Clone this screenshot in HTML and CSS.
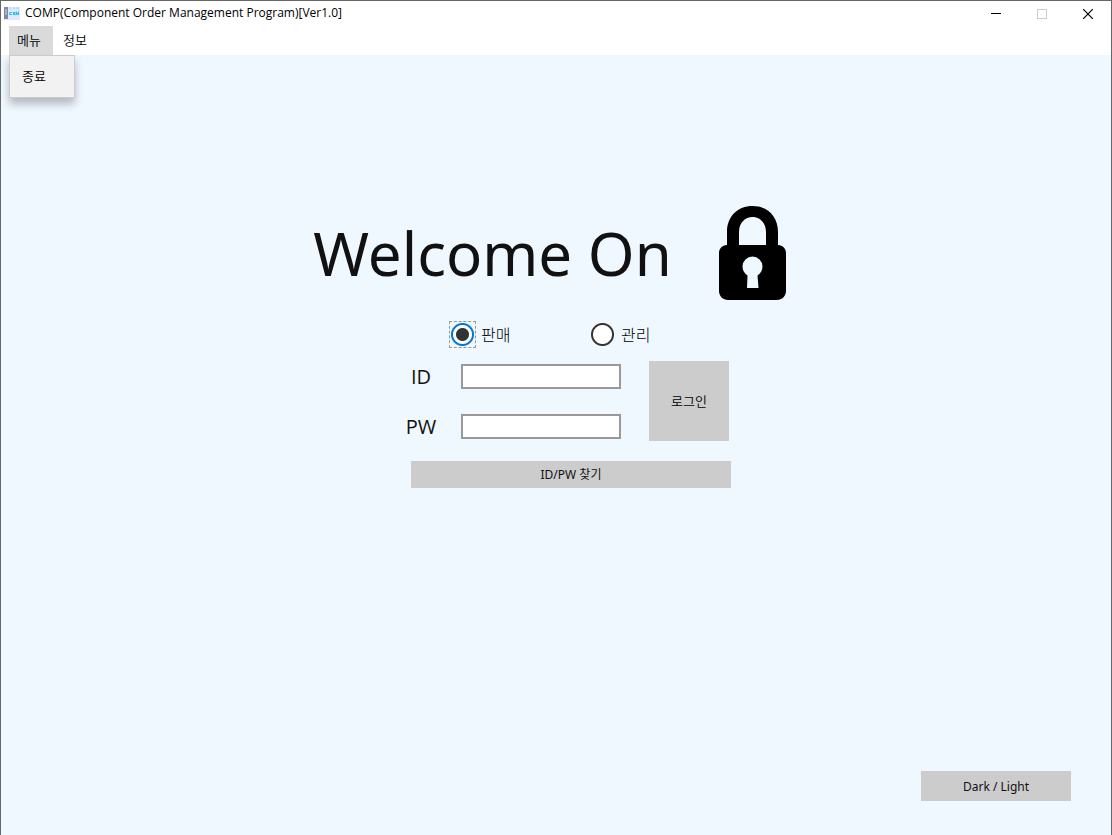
FILE: index.html
```html
<!DOCTYPE html>
<html lang="ko">
<head>
<meta charset="utf-8">
<title>COMP(Component Order Management Program)[Ver1.0]</title>
<link rel="stylesheet" href="styles.css">
</head>
<body>
<div class="window">
  <header class="titlebar">
    <svg class="app-icon" width="16" height="13" viewBox="0 0 16 13" aria-hidden="true">
      <rect width="16" height="13" fill="#dfe9fb"/>
      <rect width="4" height="12" fill="#8087a3"/>
      <rect x="1" y="2" width="2" height="6" fill="#a9afc4"/>
      <path d="M5 1h2M9 1h2M12 1h3" stroke="#8fd6f8"/>
      <path d="M8 5.500H6.500Q5.500 5.500 5.500 6.500T6.500 7.500H8M9.500 8V5.500H11L10.500 7L11.500 8M12.500 8V5.500L13.500 7L14.500 5.500V8" fill="none" stroke="#28c0f5" stroke-width="1.100"/>
    </svg>
    <span class="title">COMP(Component Order Management Program)[Ver1.0]</span>
    <div class="controls">
      <button type="button" class="control" aria-label="최소화"><svg width="10" height="10" viewBox="0 0 10 10"><path d="M0 4.500H10" stroke="#000"/></svg></button>
      <button type="button" class="control" aria-label="최대화" disabled><svg width="10" height="10" viewBox="0 0 10 10"><rect x=".5" y=".5" width="9" height="9" fill="none" stroke="#ccc"/></svg></button>
      <button type="button" class="control" aria-label="닫기"><svg width="10" height="10" viewBox="0 0 10 10"><path d="M0 0L10 10M10 0L0 10" stroke="#000" stroke-width="1.200"/></svg></button>
    </div>
  </header>
  <nav class="menubar">
    <div class="menu">
      <button type="button" class="menu-button open" aria-expanded="true">메뉴</button>
      <div class="dropdown"><button type="button" class="menu-item">종료</button></div>
    </div>
    <div class="menu"><button type="button" class="menu-button">정보</button></div>
  </nav>
  <main class="content">
    <div class="hero">
      <h1 class="welcome">Welcome On</h1>
      <svg class="lock" width="68" height="94" viewBox="0 0 68 94" aria-hidden="true">
        <path fill-rule="evenodd" d="M8 39V26C8 10 19 0 33.500 0S59 10 59 26V39C64 39 67 43 67 47V85C67 90 63 94 58 94H9C4 94 0 90 0 85V47C0 43 3 39 8 39ZM20 39H47V26C47 17 41 11 33.500 11S20 17 20 26ZM28 82H39.500L38.500 69.500C41.500 67.500 43.500 64.500 43.500 60.500A10 10 0 1 0 23.500 60.500C23.500 64.500 25.500 67.500 28.500 69.500Z"/>
      </svg>
    </div>
    <form class="login">
      <div class="roles">
        <label class="role"><input class="radio" type="radio" name="role" checked>판매</label>
        <label class="role"><input class="radio" type="radio" name="role">관리</label>
      </div>
      <div class="fields">
        <label class="field-label" for="user-id">ID</label>
        <input class="field" id="user-id" type="text">
        <button type="button" class="button submit">로그인</button>
        <label class="field-label" for="user-pw">PW</label>
        <input class="field" id="user-pw" type="password">
      </div>
      <button type="button" class="button find">ID/PW 찾기</button>
    </form>
    <button type="button" class="button theme">Dark / Light</button>
  </main>
</div>
</body>
</html>
```
FILE: styles.css
```css
* { box-sizing: border-box; }

body {
  margin: 0;
  font: 12px/16px "Noto Sans", "Noto Sans CJK KR", sans-serif;
  color: #111;
}

button, input {
  font: inherit;
  color: inherit;
  border: 0;
  border-radius: 0;
  margin: 0;
  padding: 0;
}

.window {
  display: flex;
  flex-direction: column;
  min-height: 100vh;
  background: #fff;
  border: 1px solid #666;
  border-bottom: 0;
}

.titlebar {
  display: flex;
  align-items: center;
  height: 25px;
  padding-left: 3px;
  gap: 5px;
}

.title {
  padding-bottom: 2px;
  font-family: "Open Sans", "Noto Sans", sans-serif;
  color: #000;
}

.controls {
  display: flex;
  margin-left: auto;
}

.control {
  display: flex;
  align-items: center;
  justify-content: center;
  width: 46px;
  height: 23px;
  background: none;
}

.menubar {
  display: flex;
  height: 29px;
  padding-left: 8px;
  gap: 2px;
}

.menu {
  position: relative;
  font-size: 13px;
  font-weight: 350;
  color: #000;
}

.menu-button {
  width: 44px;
  height: 29px;
  padding: 0 4px 2px 0;
  background: none;
}

.open { background: #dadada; }

.dropdown {
  position: absolute;
  top: 100%;
  left: 0;
  width: 66px;
  padding: 6px 0;
  background: #f2f2f2;
  border: 1px solid #ccc;
  box-shadow: 0 6px 8px rgba(0, 0, 0, 0.25);
}

.menu-item {
  width: 100%;
  height: 29px;
  padding: 0 0 2px 12px;
  text-align: left;
  background: none;
}

.content {
  display: flex;
  flex: 1;
  flex-direction: column;
  align-items: center;
  padding: 151px 40px 34px;
  background: #eff7ff;
}

.hero {
  display: flex;
  align-items: center;
  gap: 47px;
  padding-right: 12px;
}

.welcome {
  margin: 0;
  font-size: 60px;
  font-weight: 400;
  line-height: 94px;
}

.lock { fill: #000; }

.login {
  width: 350px;
  padding-top: 21px;
}

.roles {
  display: flex;
  padding-left: 68px;
}

.role {
  display: flex;
  align-items: center;
  gap: 5px;
  width: 140px;
  height: 27px;
  font-size: 16px;
  font-weight: 300;
  color: #000;
}

.radio {
  appearance: none;
  width: 27px;
  height: 27px;
  background: radial-gradient(circle, #fff 9px, #333 10px, #333 11px, transparent 12px) no-repeat;
}

.radio:checked {
  border: 1px dashed #999;
  background: radial-gradient(circle, #333 6px, #fff 7px, #fff 9px, #0078d7 10px, #0078d7 11px, transparent 12px) no-repeat;
}

.fields {
  display: grid;
  grid-template-columns: 80px 160px 80px;
  grid-template-rows: 30px 30px;
  row-gap: 20px;
  align-items: center;
  padding-top: 13px;
}

.field-label {
  padding-top: 2px;
  font-family: "Open Sans", "Noto Sans", sans-serif;
  font-size: 20px;
  line-height: 30px;
  text-align: center;
}

.field {
  width: 160px;
  height: 25px;
  padding: 0 4px;
  background: #fff;
  border: 2px solid #999;
}

.button { background: #ccc; }

.submit {
  grid-row: 1 / 3;
  grid-column: 3;
  width: 80px;
  height: 80px;
  margin-left: 28px;
  font-size: 13px;
  font-weight: 350;
  color: #000;
}

.find {
  display: block;
  width: 320px;
  height: 27px;
  margin: 20px 0 0 30px;
}

.theme {
  width: 150px;
  height: 30px;
  margin-top: auto;
  padding-top: 2px;
  align-self: flex-end;
}
```
